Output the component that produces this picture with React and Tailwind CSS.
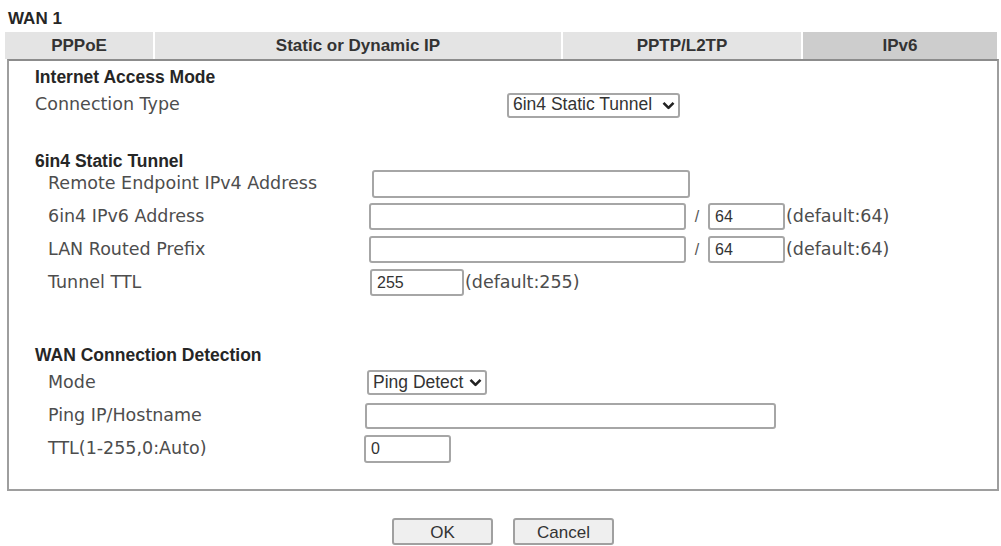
import React from 'react';

const LABEL = "text-[17.5px] leading-none text-[#4d4d4d] font-['DejaVu_Sans',sans-serif] whitespace-nowrap";
const HEAD = "text-[17.5px] font-bold text-[#262626] font-['Liberation_Sans',Arial,sans-serif] whitespace-nowrap";
const BOX = "border-2 border-[#a6a6a6] rounded-[3px] bg-white pl-[5px] text-[16px] text-[#333] font-['Liberation_Sans',Arial,sans-serif] outline-none";
const TAB = "flex items-center justify-center border-r-2 border-white text-[17px] font-bold text-[#333] font-['Liberation_Sans',Arial,sans-serif]";

const Chevron = () => (
  <svg width="13" height="9" viewBox="0 0 13 9" className="shrink-0">
    <polyline points="1.5,1.8 6.5,6.8 11.5,1.8" fill="none" stroke="#222" strokeWidth="2.6" strokeLinejoin="round" />
  </svg>
);

const Select = ({ value, className }) => (
  <div className={`flex items-center justify-between border-2 border-[#a6a6a6] rounded-[3px] bg-white pl-[4px] pr-[3px] ${className}`}>
    <span className="text-[17.5px] leading-none text-[#333] font-['Liberation_Sans',Arial,sans-serif] whitespace-nowrap">{value}</span>
    <Chevron />
  </div>
);

const Row = ({ label, col, children }) => (
  <div className="flex h-[33px] items-center">
    <div className={`${col} shrink-0 pl-[39px] ${LABEL}`}>{label}</div>
    {children}
  </div>
);

export default function App() {
  return (
    <div className="w-[1001px] h-[546px] bg-white overflow-hidden">
      <div className={`h-[32px] pl-[8px] pt-[10px] leading-[18px] ${HEAD} text-[17px] text-[#1a1a1a]`}>WAN 1</div>

      {/* tabs */}
      <div className="ml-[5px] flex h-[27px] w-[994px] bg-[#e4e4e4]">
        <div className={`w-[150px] ${TAB}`}>PPPoE</div>
        <div className={`w-[408px] ${TAB}`}>Static or Dynamic IP</div>
        <div className={`w-[240px] ${TAB}`}>PPTP/L2TP</div>
        <div className={`w-[196px] ${TAB} border-r-0 bg-[#cdcdcd]`}>IPv6</div>
      </div>

      {/* panel */}
      <div className="ml-[7px] w-[992px] h-[432px] border-2 border-[#9e9e9e] border-t-[#8c8c8c]">
        <div className={`mt-[1px] h-[30px] leading-[30px] pl-[26px] ${HEAD}`}>Internet Access Mode</div>
        <div className="flex h-[26px] items-center">
          <div className={`w-[498px] shrink-0 pl-[26px] ${LABEL}`}>Connection Type</div>
          <Select value="6in4 Static Tunnel" className="w-[173px] h-[25px]" />
        </div>

        <div className={`mt-[33px] h-[16px] leading-[20px] pl-[26px] ${HEAD}`}>6in4 Static Tunnel</div>
        <Row label="Remote Endpoint IPv4 Address" col="w-[360px]">
          <input readOnly className={`ml-[3px] w-[318px] h-[28px] ${BOX}`} defaultValue="" />
        </Row>
        <Row label="6in4 IPv6 Address" col="w-[360px]">
          <input readOnly className={`w-[317px] h-[27px] ${BOX}`} defaultValue="" />
          <span className="w-[22px] text-center text-[16px] text-[#555] font-['Liberation_Sans',Arial,sans-serif]">/</span>
          <input readOnly className={`w-[77px] h-[27px] ${BOX}`} defaultValue="64" />
          <span className={`ml-[1px] ${LABEL}`}>(default:64)</span>
        </Row>
        <Row label="LAN Routed Prefix" col="w-[360px]">
          <input readOnly className={`w-[317px] h-[27px] ${BOX}`} defaultValue="" />
          <span className="w-[22px] text-center text-[16px] text-[#555] font-['Liberation_Sans',Arial,sans-serif]">/</span>
          <input readOnly className={`w-[77px] h-[27px] ${BOX}`} defaultValue="64" />
          <span className={`ml-[1px] ${LABEL}`}>(default:64)</span>
        </Row>
        <Row label="Tunnel TTL" col="w-[360px]">
          <input readOnly className={`ml-[1px] w-[94px] h-[27px] ${BOX}`} defaultValue="255" />
          <span className={`ml-[1px] ${LABEL}`}>(default:255)</span>
        </Row>

        <div className={`mt-[46px] h-[21px] leading-[20px] pl-[26px] ${HEAD}`}>WAN Connection Detection</div>
        <Row label="Mode" col="w-[355px]">
          <Select value="Ping Detect" className="ml-[3px] w-[120px] h-[25px]" />
        </Row>
        <Row label="Ping IP/Hostname" col="w-[355px]">
          <input readOnly className={`ml-[1px] w-[411px] h-[26px] ${BOX}`} defaultValue="" />
        </Row>
        <Row label="TTL(1-255,0:Auto)" col="w-[355px]">
          <input readOnly className={`w-[87px] h-[28px] ${BOX}`} defaultValue="0" />
        </Row>
      </div>

      {/* buttons */}
      <div className="ml-[7px] w-[992px] mt-[27px] flex justify-center gap-[20px]">
        <button className="w-[101px] h-[27px] border-2 border-[#a0a0a0] rounded-[3px] bg-[#efefef] text-[17px] text-[#333] font-['Liberation_Sans',Arial,sans-serif]">OK</button>
        <button className="w-[101px] h-[27px] border-2 border-[#a0a0a0] rounded-[3px] bg-[#efefef] text-[17px] text-[#333] font-['Liberation_Sans',Arial,sans-serif]">Cancel</button>
      </div>
    </div>
  );
}
